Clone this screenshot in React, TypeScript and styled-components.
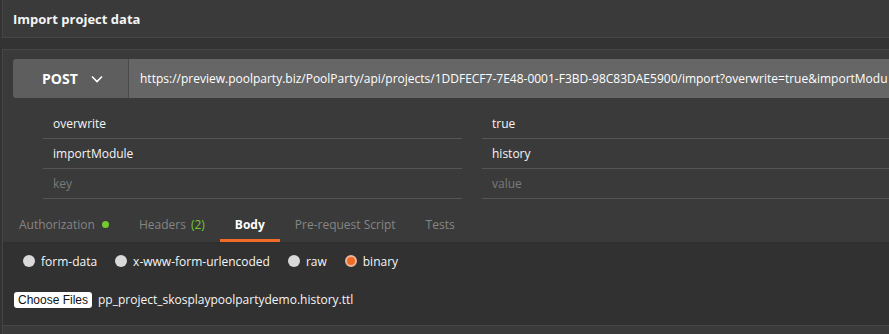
import React from 'react';
import styled, { createGlobalStyle } from 'styled-components';

const GlobalStyle = createGlobalStyle`
  html, body {
    margin: 0;
    padding: 0;
    background: #333333;
    font-family: 'Open Sans', 'DejaVu Sans', sans-serif;
    -webkit-font-smoothing: antialiased;
  }
`;

const Page = styled.div`
  width: 889px;
  height: 334px;
  overflow: hidden;
  padding-left: 2px;
  box-sizing: border-box;
`;

const TitlePanel = styled.div`
  height: 38px;
  box-sizing: border-box;
  background: #3a3a3a;
  border: 1px solid #454545;
  border-top: none;
  border-right: none;
  display: flex;
  align-items: center;
  padding-left: 10px;
  color: #f4f4f4;
  font-size: 13px;
  font-weight: 700;
`;

const MainPanel = styled.div`
  margin-top: 11px;
  background: #3a3a3a;
  border: 1px solid #454545;
  border-right: none;
  border-bottom: none;
  padding-top: 9px;
  height: 300px;
`;

const UrlBar = styled.div`
  margin-left: 10px;
  height: 39px;
  display: flex;
  border-radius: 3px 0 0 3px;
  overflow: hidden;
`;

const MethodBox = styled.div`
  width: 116px;
  flex: none;
  background: #5e5e5e;
  border-right: 1px solid #4a4a4a;
  display: flex;
  align-items: center;
  padding-left: 29px;
  box-sizing: border-box;
  gap: 13px;
  color: #ffffff;
  font-size: 14px;
  font-weight: 700;
`;

const UrlField = styled.div`
  flex: 1;
  background: #666666;
  display: flex;
  align-items: center;
  padding-left: 11px;
  color: #ffffff;
  font-size: 12px;
  white-space: nowrap;
  overflow: hidden;
`;

const ParamTable = styled.div`
  margin: 11px 0 0 40px;
  display: grid;
  grid-template-columns: 419px 1fr;
  column-gap: 20px;
`;

const Cell = styled.div<{ $placeholder?: boolean }>`
  height: 30px;
  box-sizing: border-box;
  border-bottom: 1px solid #555555;
  display: flex;
  align-items: center;
  padding-left: 10px;
  font-size: 12px;
  color: ${p => (p.$placeholder ? '#7a7a7a' : '#f5f5f5')};
`;

const Tabs = styled.div`
  height: 44px;
  display: flex;
  align-items: stretch;
  padding-left: 1px;
  border-bottom: 1px solid #2e2e2e;
  box-sizing: border-box;
`;

const Tab = styled.div<{ $active?: boolean }>`
  padding: 10px 15px 0;
  display: flex;
  align-items: center;
  gap: 5px;
  font-size: 12px;
  color: ${p => (p.$active ? '#ffffff' : '#858585')};
  font-weight: ${p => (p.$active ? 700 : 400)};
  border-bottom: 3px solid ${p => (p.$active ? '#f26b26' : 'transparent')};
  box-sizing: border-box;
`;

const Dot = styled.span`
  width: 7px;
  height: 7px;
  border-radius: 50%;
  background: #73c92d;
  margin-left: 2px;
`;

const Count = styled.span`
  color: #73c92d;
`;

const BodySection = styled.div`
  background: #313131;
  height: 83px;
  padding: 9px 0 0 20px;
  box-sizing: border-box;
  border-bottom: 1px solid #454545;
`;

const RadioRow = styled.div`
  display: flex;
  align-items: center;
  height: 18px;
`;

const RadioOption = styled.label`
  display: flex;
  align-items: center;
  gap: 6px;
  margin-right: 18px;
  color: #f5f5f5;
  font-size: 12px;
`;

const RadioCircle = styled.span<{ $checked?: boolean }>`
  width: 12px;
  height: 12px;
  border-radius: 50%;
  box-sizing: border-box;
  background: ${p => (p.$checked ? '#f26b26' : '#d9d9d9')};
  border: ${p => (p.$checked ? '2px solid #e8b79c' : 'none')};
`;

const FileRow = styled.div`
  margin: 21px 0 0 -9px;
  display: flex;
  align-items: center;
  gap: 6px;
`;

const ChooseButton = styled.button`
  height: 16px;
  width: 78px;
  padding: 0;
  border: none;
  border-radius: 3px;
  background: #ffffff;
  color: #111111;
  font-family: 'Liberation Sans', Arial, sans-serif;
  font-size: 12px;
  line-height: 16px;
`;

const FileName = styled.span`
  color: #f5f5f5;
  font-size: 12px;
`;

const Chevron = () => (
  <svg width="12" height="8" viewBox="0 0 12 8" fill="none">
    <path d="M1 1.5 L6 6.5 L11 1.5" stroke="#ffffff" strokeWidth="1.6" />
  </svg>
);

const params = [
  { key: 'overwrite', value: 'true' },
  { key: 'importModule', value: 'history' },
];

export default function App() {
  return (
    <Page>
      <GlobalStyle />
      <TitlePanel>Import project data</TitlePanel>
      <MainPanel>
        <UrlBar>
          <MethodBox>
            POST <Chevron />
          </MethodBox>
          <UrlField>
            https://preview.poolparty.biz/PoolParty/api/projects/1DDFECF7-7E48-0001-F3BD-98C83DAE5900/import?overwrite=true&amp;importModu
          </UrlField>
        </UrlBar>
        <ParamTable>
          {params.map(p => (
            <React.Fragment key={p.key}>
              <Cell>{p.key}</Cell>
              <Cell>{p.value}</Cell>
            </React.Fragment>
          ))}
          <Cell $placeholder>key</Cell>
          <Cell $placeholder>value</Cell>
        </ParamTable>
        <Tabs>
          <Tab>
            Authorization <Dot />
          </Tab>
          <Tab>
            Headers <Count>(2)</Count>
          </Tab>
          <Tab $active>Body</Tab>
          <Tab>Pre-request Script</Tab>
          <Tab>Tests</Tab>
        </Tabs>
        <BodySection>
          <RadioRow>
            <RadioOption><RadioCircle />form-data</RadioOption>
            <RadioOption><RadioCircle />x-www-form-urlencoded</RadioOption>
            <RadioOption><RadioCircle />raw</RadioOption>
            <RadioOption><RadioCircle $checked />binary</RadioOption>
          </RadioRow>
          <FileRow>
            <ChooseButton>Choose Files</ChooseButton>
            <FileName>pp_project_skosplaypoolpartydemo.history.ttl</FileName>
          </FileRow>
        </BodySection>
      </MainPanel>
    </Page>
  );
}
